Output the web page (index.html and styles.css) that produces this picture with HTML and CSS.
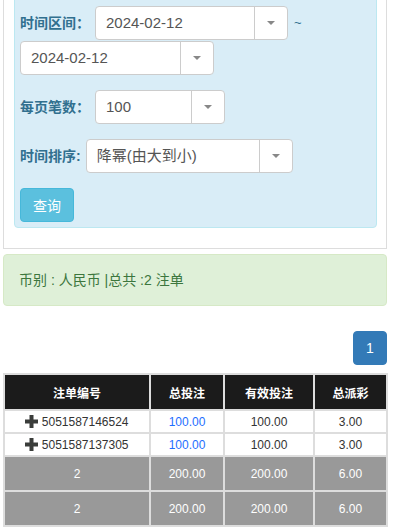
FILE: index.html
```html
<!DOCTYPE html>
<html lang="zh-CN">
<head>
    <meta charset="UTF-8">
    <meta name="viewport" content="width=device-width, initial-scale=1.0">
    <title>注单查询</title>
    <link rel="stylesheet" href="styles.css">
</head>
<body>
    <div class="page">
        <div class="panel">
            <form class="well">
                <div class="form-group range">
                    <label>时间区间：</label>
                    <div class="select w193"><span class="value">2024-02-12</span><span class="arrow"></span></div>
                    <span class="tilde">~</span>
                    <div class="select w194"><span class="value">2024-02-12</span><span class="arrow"></span></div>
                </div>
                <div class="form-group">
                    <label>每页笔数：</label>
                    <div class="select w130"><span class="value">100</span><span class="arrow"></span></div>
                </div>
                <div class="form-group">
                    <label>时间排序:</label>
                    <div class="select w207"><span class="value">降幂(由大到小)</span><span class="arrow"></span></div>
                </div>
                <button type="button" class="btn-info">查询</button>
            </form>
        </div>

        <div class="alert">币别 : 人民币 |总共 :2 注单</div>

        <div class="pager">
            <a href="#" class="current">1</a>
        </div>

        <table class="report">
            <colgroup>
                <col style="width:144px">
                <col style="width:72px">
                <col style="width:88px">
                <col style="width:71px">
            </colgroup>
            <thead>
                <tr>
                    <th>注单编号</th>
                    <th>总投注</th>
                    <th>有效投注</th>
                    <th>总派彩</th>
                </tr>
            </thead>
            <tbody>
                <tr class="row">
                    <td><svg class="plus" width="13" height="13" viewBox="0 0 13 13"><rect x="4.5" y="0" width="4" height="13"/><rect x="0" y="4.5" width="13" height="4"/></svg> 5051587146524</td>
                    <td class="blue">100.00</td>
                    <td>100.00</td>
                    <td>3.00</td>
                </tr>
                <tr class="row">
                    <td><svg class="plus" width="13" height="13" viewBox="0 0 13 13"><rect x="4.5" y="0" width="4" height="13"/><rect x="0" y="4.5" width="13" height="4"/></svg> 5051587137305</td>
                    <td class="blue">100.00</td>
                    <td>100.00</td>
                    <td>3.00</td>
                </tr>
                <tr class="total">
                    <td>2</td>
                    <td>200.00</td>
                    <td>200.00</td>
                    <td>6.00</td>
                </tr>
                <tr class="total">
                    <td>2</td>
                    <td>200.00</td>
                    <td>200.00</td>
                    <td>6.00</td>
                </tr>
            </tbody>
        </table>
    </div>
</body>
</html>
```

FILE: styles.css
```css
body{
    margin: 0;
    font-family: "Liberation Sans", "Noto Sans CJK SC", sans-serif;
    font-size: 14px;
    color: #333;
    background: #fff;
}
.page{
    padding: 0 11px 0 3px;
}

/* search panel, scrolled so its top is off screen */
.panel{
    margin-top: -21px;
    border: 1px solid #ddd;
    padding: 9px 9px 20px 10px;
}
.well{
    background-color: #d9edf7;
    border: 1px solid #bce8f1;
    border-radius: 4px;
    padding: 16px 5px 5px 5px;
    margin: 0;
}
.form-group{
    display: flex;
    align-items: center;
    gap: 5px;
    margin-bottom: 15px;
}
.range{
    flex-wrap: wrap;
    row-gap: 1px;
}
label{
    color: #31708f;
    font-weight: bold;
    font-size: 14px;
    line-height: 34px;
}
.tilde{
    color: #31708f;
    font-size: 13px;
    margin-left: 1px;
    margin-top: -2px;
}
.select{
    display: flex;
    height: 34px;
    box-sizing: border-box;
    background: #fff;
    border: 1px solid #ccc;
    border-radius: 4px;
}
.select .value{
    flex: 1;
    padding-left: 10px;
    line-height: 32px;
    font-size: 15px;
    color: #555;
}
.select .arrow{
    width: 32px;
    border-left: 1px solid #ccc;
    display: flex;
    align-items: center;
    justify-content: center;
}
.select .arrow::after{
    content: "";
    border-left: 4px solid transparent;
    border-right: 4px solid transparent;
    border-top: 4px solid #888;
}
.w193{ width: 193px; }
.w194{ width: 194px; }
.w130{ width: 130px; }
.w207{ width: 207px; }

.btn-info{
    display: block;
    height: 34px;
    padding: 0 12px;
    font-family: inherit;
    font-size: 14px;
    color: #fff;
    background-color: #5bc0de;
    border: 1px solid #46b8da;
    border-radius: 4px;
}

.alert{
    margin-top: 5px;
    padding: 15px;
    line-height: 20px;
    color: #3c763d;
    background-color: #dff0d8;
    border: 1px solid #d6e9c6;
    border-radius: 4px;
}

.pager{
    display: flex;
    justify-content: flex-end;
    margin-top: 25px;
}
.pager a{
    display: block;
    width: 34px;
    height: 34px;
    box-sizing: border-box;
    line-height: 32px;
    text-align: center;
    color: #fff;
    text-decoration: none;
    background-color: #337ab7;
    border: 1px solid #337ab7;
    border-radius: 4px;
}

.report{
    margin-top: 8px;
    width: 384px;
    table-layout: fixed;
    border-spacing: 2px;
    background: #ddd;
    font-size: 12px;
}
.report th{
    height: 34px;
    padding: 0;
    background: #1b1b1b;
    color: #fff;
    font-weight: bold;
    text-align: center;
}
.report td{
    padding: 0;
    text-align: center;
    line-height: 14px;
}
.row td{
    height: 21px;
    background: #fff;
    color: #333;
}
.total td{
    height: 33px;
    background: #999;
    color: #fff;
}
.blue{
    color: #1e6eff !important;
}
.plus{
    fill: #3a3d3a;
    vertical-align: -2px;
}
```
